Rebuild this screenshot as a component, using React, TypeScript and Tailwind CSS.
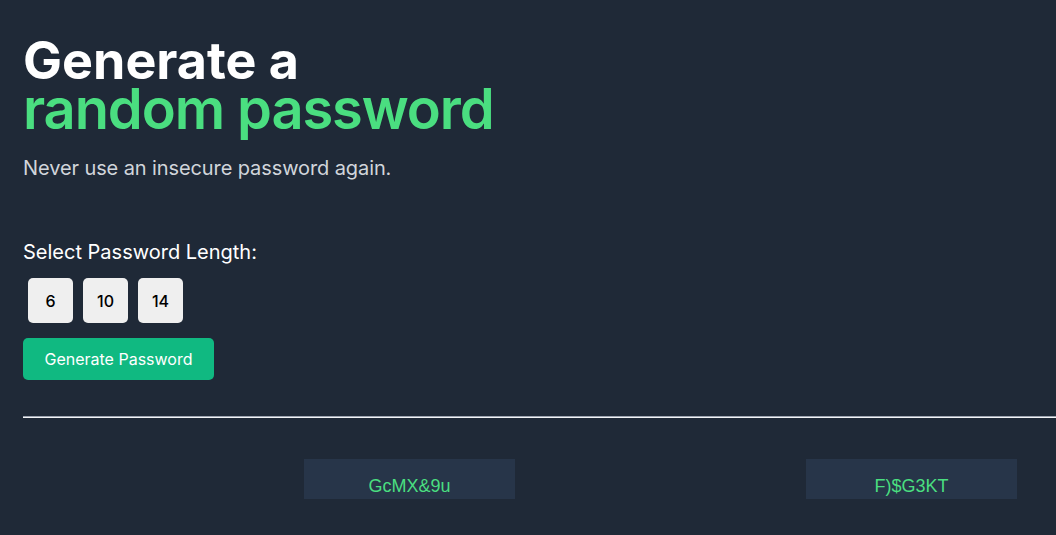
import React from "react";

export default function App() {
  const lengths = [6, 10, 14];
  const passwords = ["GcMX&9u", "F)$G3KT"];
  return (
    <div
      className="min-h-[535px] w-full overflow-hidden bg-[#1f2937] pl-[23px] pt-[38px]"
      style={{ fontFamily: "Inter, 'Noto Sans', sans-serif" }}
    >
      <h1 className="text-white">
        <span className="block text-[52px] font-bold leading-[46px]">Generate a</span>
        <span className="block text-[56px] font-semibold leading-[51px] tracking-[-1.1px] text-[#4ade80]">
          random password
        </span>
      </h1>
      <p className="mt-[19px] text-[20px] leading-[28px] tracking-[-0.1px] text-[#d1d5db]">
        Never use an insecure password again.
      </p>
      <p className="mt-[56px] text-[20px] leading-[28px] text-white">
        Select Password Length:
      </p>
      <div className="ml-[5px] mt-[12px] flex gap-[10px]">
        {lengths.map((l) => (
          <button
            key={l}
            className="flex h-[45px] w-[45px] items-center justify-center rounded-[5px] bg-[#efefef] text-[16px] font-medium text-black"
          >
            {l}
          </button>
        ))}
      </div>
      <button className="mt-[15px] h-[42px] w-[191px] rounded-[5px] bg-[#10b981] text-[16px] text-white">
        Generate Password
      </button>
      <div className="mt-[36px] h-[2px] w-[1040px] border-t border-[#9ca3af] bg-[#f3f4f6]" />
      <div className="ml-[281px] mt-[41px] flex gap-[291px]">
        {passwords.map((p) => (
          <div
            key={p}
            className="h-[40px] w-[211px] bg-[#273549] pt-[17px] text-center text-[18px] leading-[21px] text-[#4ade80]"
            style={{ fontFamily: "'Liberation Sans', Arial, sans-serif" }}
          >
            {p}
          </div>
        ))}
      </div>
    </div>
  );
}
